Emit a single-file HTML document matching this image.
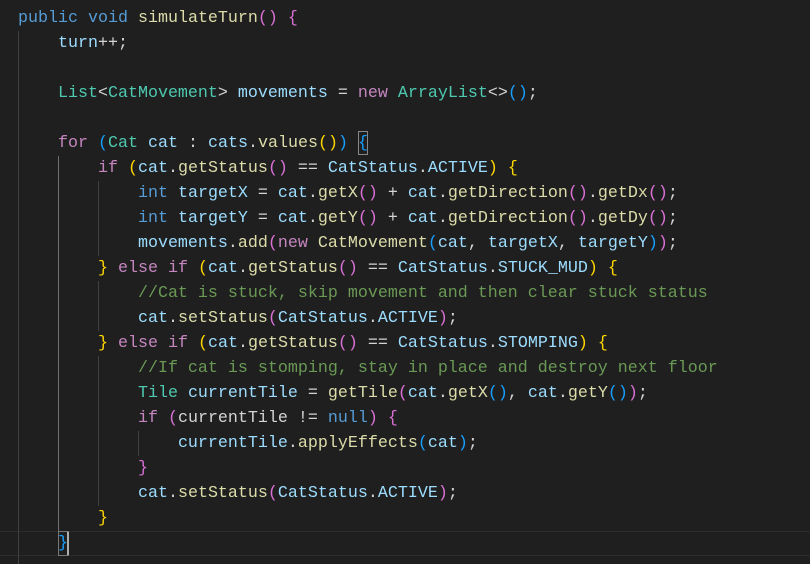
<!DOCTYPE html>
<html><head><meta charset="utf-8"><style>
html,body{margin:0;padding:0;background:#1f1f1f;width:810px;height:564px;overflow:hidden;position:relative}
pre{margin:0;position:absolute;left:18px;top:6px;font-family:"Liberation Mono",monospace;font-size:16.67px;line-height:25px;color:#d4d4d4;white-space:pre}
.k{color:#569cd6}.c{color:#c586c0}.f{color:#dcdcaa}.t{color:#4ec9b0}.v{color:#9cdcfe}.m{color:#6a9955}
.y{color:#ffd700}.p{color:#da70d6}.b{color:#179fff}
.g{position:absolute;width:1px;background:#404040}
</style></head><body>
<div style="position:absolute;left:0;top:531px;width:810px;height:23px;border-top:1px solid #2c2c2c;border-bottom:1px solid #2c2c2c"></div>
<div class="g" style="left:18px;top:31px;height:533px"></div>
<div class="g" style="left:58px;top:156px;height:375px;background:#707070"></div>
<div class="g" style="left:98px;top:181px;height:75px"></div>
<div class="g" style="left:98px;top:281px;height:50px"></div>
<div class="g" style="left:98px;top:356px;height:150px"></div>
<div class="g" style="left:138px;top:431px;height:25px"></div>
<div style="position:absolute;left:58px;top:531px;width:9px;height:23px;border:1px solid #777"></div>
<div style="position:absolute;left:67px;top:532px;width:2px;height:23px;background:#aeafad"></div>
<div style="position:absolute;left:358px;top:131px;width:10px;height:24px;border:1px solid #888;box-sizing:border-box"></div>
<pre><span class="k">public</span> <span class="k">void</span> <span class="f">simulateTurn</span><span class="p">()</span> <span class="p">{</span>
    <span class="v">turn</span>++;

    <span class="t">List</span>&lt;<span class="t">CatMovement</span>&gt; <span class="v">movements</span> = <span class="c">new</span> <span class="t">ArrayList</span>&lt;&gt;<span class="b">()</span>;

    <span class="c">for</span> <span class="b">(</span><span class="t">Cat</span> <span class="v">cat</span> : <span class="v">cats</span>.<span class="f">values</span><span class="y">()</span><span class="b">)</span> <span class="b">{</span>
        <span class="c">if</span> <span class="y">(</span><span class="v">cat</span>.<span class="f">getStatus</span><span class="p">()</span> == <span class="v">CatStatus</span>.<span class="v">ACTIVE</span><span class="y">)</span> <span class="y">{</span>
            <span class="k">int</span> <span class="v">targetX</span> = <span class="v">cat</span>.<span class="f">getX</span><span class="p">()</span> + <span class="v">cat</span>.<span class="f">getDirection</span><span class="p">()</span>.<span class="f">getDx</span><span class="p">()</span>;
            <span class="k">int</span> <span class="v">targetY</span> = <span class="v">cat</span>.<span class="f">getY</span><span class="p">()</span> + <span class="v">cat</span>.<span class="f">getDirection</span><span class="p">()</span>.<span class="f">getDy</span><span class="p">()</span>;
            <span class="v">movements</span>.<span class="f">add</span><span class="p">(</span><span class="c">new</span> <span class="f">CatMovement</span><span class="b">(</span><span class="v">cat</span>, <span class="v">targetX</span>, <span class="v">targetY</span><span class="b">)</span><span class="p">)</span>;
        <span class="y">}</span> <span class="c">else</span> <span class="c">if</span> <span class="y">(</span><span class="v">cat</span>.<span class="f">getStatus</span><span class="p">()</span> == <span class="v">CatStatus</span>.<span class="v">STUCK_MUD</span><span class="y">)</span> <span class="y">{</span>
            <span class="m">//Cat is stuck, skip movement and then clear stuck status</span>
            <span class="v">cat</span>.<span class="f">setStatus</span><span class="p">(</span><span class="v">CatStatus</span>.<span class="v">ACTIVE</span><span class="p">)</span>;
        <span class="y">}</span> <span class="c">else</span> <span class="c">if</span> <span class="y">(</span><span class="v">cat</span>.<span class="f">getStatus</span><span class="p">()</span> == <span class="v">CatStatus</span>.<span class="v">STOMPING</span><span class="y">)</span> <span class="y">{</span>
            <span class="m">//If cat is stomping, stay in place and destroy next floor</span>
            <span class="t">Tile</span> <span class="v">currentTile</span> = <span class="f">getTile</span><span class="p">(</span><span class="v">cat</span>.<span class="f">getX</span><span class="b">()</span>, <span class="v">cat</span>.<span class="f">getY</span><span class="b">()</span><span class="p">)</span>;
            <span class="c">if</span> <span class="p">(</span>currentTile != <span class="k">null</span><span class="p">)</span> <span class="p">{</span>
                <span class="v">currentTile</span>.<span class="f">applyEffects</span><span class="b">(</span><span class="v">cat</span><span class="b">)</span>;
            <span class="p">}</span>
            <span class="v">cat</span>.<span class="f">setStatus</span><span class="p">(</span><span class="v">CatStatus</span>.<span class="v">ACTIVE</span><span class="p">)</span>;
        <span class="y">}</span>
    <span class="b">}</span></pre>
</body></html>
